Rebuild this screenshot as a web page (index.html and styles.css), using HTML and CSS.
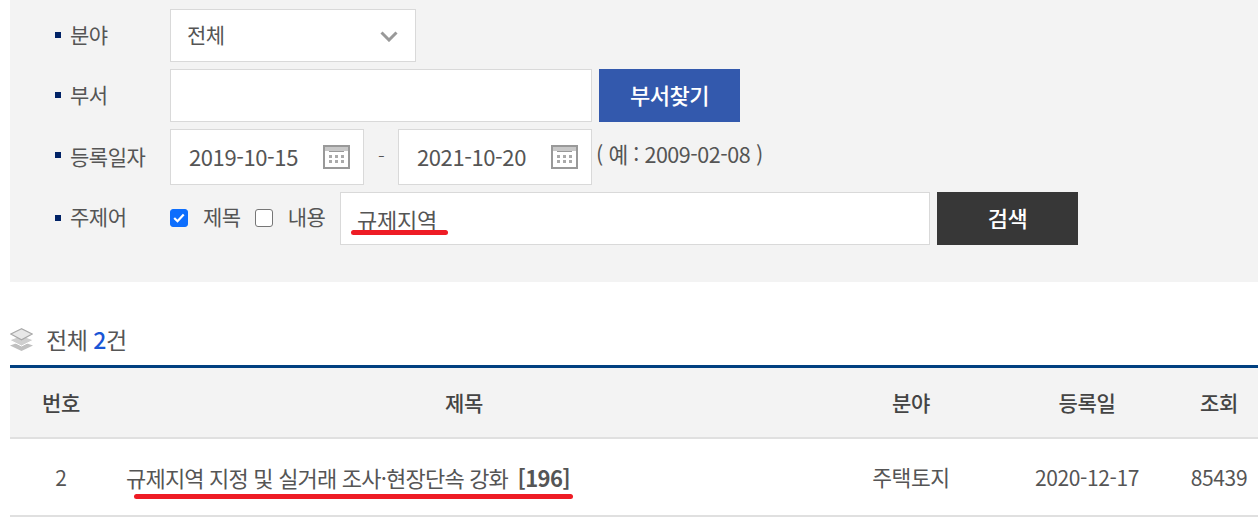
FILE: index.html
```html
<!doctype html>
<html lang="ko">
<head>
<meta charset="UTF-8">
<title>검색 결과</title>
<link rel="stylesheet" href="styles.css">
</head>
<body>
	<form class="search">
		<div class="row">
			<div class="label">분야</div>
			<div class="box select">전체
				<svg class="chevron" width="18" height="11" viewBox="0 0 18 11"><path d="M1.500 1.500l7.500 7.500 7.500-7.500" fill="none" stroke="#999" stroke-width="3"/></svg>
			</div>
		</div>
		<div class="row">
			<div class="label">부서</div>
			<div class="box dept"></div>
			<div class="btn btn-blue">부서찾기</div>
		</div>
		<div class="row row-date">
			<div class="label label-date">등록일자</div>
			<div class="box date">2019-10-15
				<svg class="cal" width="27" height="24" viewBox="0 0 27 24"><use href="#cal"/></svg>
			</div>
			<span class="dash">-</span>
			<div class="box date">2021-10-20
				<svg class="cal" width="27" height="24" viewBox="0 0 27 24"><use href="#cal"/></svg>
			</div>
			<span class="hint">( 예 : 2009-02-08 )</span>
		</div>
		<div class="row">
			<div class="label label-key">주제어</div>
			<div class="checks">
				<span class="check on"><svg width="12" height="10" viewBox="0 0 12 10"><path d="M1.200 5l3.300 3.200 6.200-6.800" fill="none" stroke="#fff" stroke-width="2.200"/></svg></span>
				<span class="check-text">제목</span>
				<span class="check"></span>
				<span class="check-text">내용</span>
			</div>
			<div class="box keyword">규제지역<i class="mark mark-keyword"></i></div>
			<div class="btn btn-dark">검색</div>
		</div>
	</form>

	<div class="total">
		<svg width="23" height="23" viewBox="0 0 23 23">
			<path d="M11.500 13.500L0 17.500 11.500 23 23 17.500z" fill="#c0c0c0"/>
			<path d="M11.500 7.500L-.5 12 11.500 18 23.500 12z" fill="#cfcfcf" stroke="#fff"/>
			<path d="M11.500 .7L.8 6 11.500 11.800 22.200 6z" fill="#e8e8e8" stroke="#a8a8a8" stroke-width="1.200"/>
		</svg>
		<span>전체 <b>2</b>건</span>
	</div>

	<div class="table">
		<div class="tr th">
			<div>번호</div><div>제목</div><div>분야</div><div>등록일</div><div class="hits">조회</div>
		</div>
		<div class="tr">
			<div>2</div>
			<div class="subject">규제지역 지정 및 실거래 조사·현장단속 강화 <b>[196]</b><i class="mark mark-subject"></i></div>
			<div class="field">주택토지</div><div>2020-12-17</div><div class="hits">85439</div>
		</div>
	</div>

	<svg class="defs" width="0" height="0">
		<symbol id="cal" viewBox="0 0 27 24">
			<rect x="1" y="1" width="25" height="22" fill="#fff" stroke="#999" stroke-width="2"/>
			<rect x="2" y="2" width="23" height="4" fill="#c8c8c8"/>
			<path d="M6 6.500h15" stroke="#999"/>
			<path d="M6 11.500h3M12 11.500h3M18 11.500h3M6 16.500h3M12 16.500h3M18 16.500h3" stroke="#aaa" stroke-width="3"/>
		</symbol>
	</svg>
</body>
</html>
```

FILE: styles.css
```css
* {
	box-sizing:border-box;
}

body {
	margin:0;
	overflow:hidden;
	font-family:"Noto Sans CJK KR", "Noto Sans", sans-serif;
	font-size:21px;
	letter-spacing:-0.5px;
	color:#555;
}

.search {
	margin-left:10px;
	height:282px;
	padding:9px 0 0 45px;
	background:#f3f3f3;
}

.row {
	display:flex;
	height:53px;
	margin-bottom:7px;
}

.row-date {
	height:56px;
}

.label {
	position:relative;
	width:115px;
	padding-left:15px;
	line-height:50px;
}

.label-date {
	line-height:54px;
}

.label-key {
	line-height:48px;
}

.label::before {
	content:"";
	position:absolute;
	left:0;
	top:23px;
	width:6px;
	height:6px;
	background:#002266;
}

.box {
	position:relative;
	background:#fff;
	border:1px solid #d9d9d9;
	line-height:49px;
}

.select {
	width:246px;
	padding-left:16px;
}

.chevron {
	position:absolute;
	right:17px;
	top:21px;
}

.dept {
	width:422px;
}

.btn {
	margin-left:7px;
	width:141px;
	text-align:center;
	color:#fff;
	font-size:22px;
	font-weight:500;
	line-height:51px;
}

.btn-blue {
	background:#3359ad;
}

.btn-dark {
	background:#373737;
}

.date {
	width:194px;
	padding-left:18px;
	font-size:22px;
	letter-spacing:-0.4px;
	line-height:53px;
}

.cal {
	position:absolute;
	right:13px;
	top:15px;
}

.dash {
	width:34px;
	text-align:center;
	font-size:20px;
	font-weight:300;
	line-height:54px;
}

.hint {
	margin-left:4px;
	font-size:21.5px;
	letter-spacing:-0.45px;
	line-height:50px;
}

.checks {
	display:flex;
	align-items:center;
	width:170px;
	height:48px;
}

.check {
	display:flex;
	align-items:center;
	justify-content:center;
	width:18px;
	height:18px;
	margin-top:4px;
	background:#fff;
	border:1px solid #767676;
	border-radius:3px;
}

.check.on {
	background:#0d6efd;
	border-color:#0d6efd;
}

.check-text {
	margin:0 14px 0 15px;
}

.check-text:last-child {
	margin:0 0 0 15px;
}

.keyword {
	width:590px;
	padding-left:16px;
	font-size:22px;
	letter-spacing:-0.2px;
	line-height:53px;
}

.mark {
	position:absolute;
	height:5px;
	border-radius:3px;
	background:#ee1c25;
}

.mark-keyword {
	left:10px;
	top:37px;
	width:97px;
}

.total {
	display:flex;
	align-items:center;
	gap:13px;
	height:83px;
	font-size:23px;
	padding-top:31px;
	padding-left:10px;
}

.total b {
	color:#1a56d6;
	font-weight:500;
}

.table {
	margin-left:10px;
	border-top:3px solid #004080;
}

.tr {
	display:grid;
	grid-template-columns:102px 704px 190px 162px 90px;
	height:78px;
	border-bottom:2px solid #e0e0e0;
	text-align:center;
	letter-spacing:-0.4px;
	line-height:76px;
}

.tr.th {
	height:71px;
	background:#f3f3f3;
	font-weight:500;
	color:#444;
	line-height:69px;
}

.hits {
	padding-left:12px;
}

.field {
	font-size:21.5px;
}

.subject {
	position:relative;
	text-align:left;
	padding-left:14px;
	font-size:22px;
	letter-spacing:-0.8px;
}

.subject b {
	margin-left:4px;
	font-weight:700;
	letter-spacing:-0.6px;
}

.mark-subject {
	left:22px;
	top:55px;
	width:439px;
}

.defs {
	position:absolute;
}
```
